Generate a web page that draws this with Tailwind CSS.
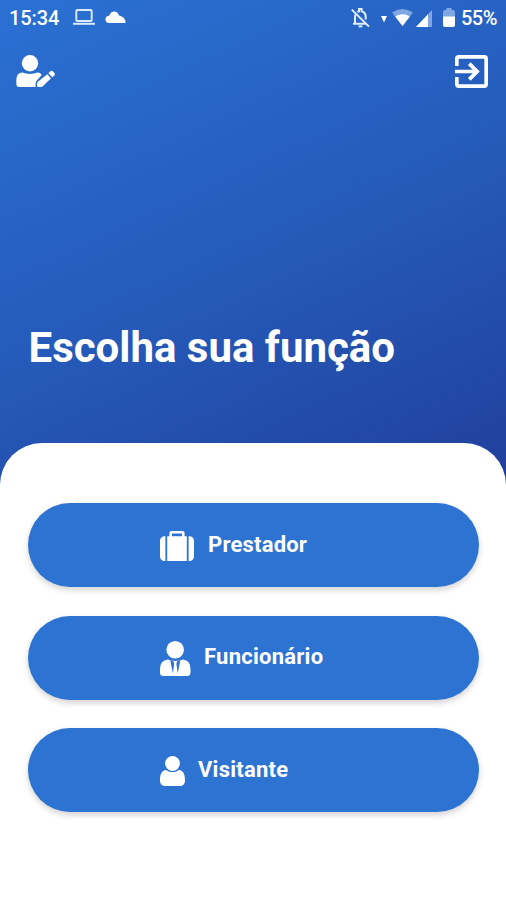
<!DOCTYPE html>
<html lang="pt-BR">
<head>
  <meta charset="UTF-8">
  <meta name="viewport" content="width=device-width, initial-scale=1.0">
  <title>Escolha sua função</title>
  <script src="https://cdn.jsdelivr.net/npm/@tailwindcss/browser@4"></script>
</head>
<body class="bg-white font-['Roboto',sans-serif] text-white">
  <div class="flex flex-col h-[900px] w-[506px] overflow-hidden bg-white">
    <div class="flex flex-col shrink-0 h-[485px] bg-linear-[155deg,#2a71d3_0%,#2559b8_55%,#213f9b_100%]">
      <!-- Status bar -->
      <div class="flex items-center justify-between h-9 pl-[9px] pr-[7px]">
        <div class="flex items-center">
          <span class="w-[50px] text-[20px] leading-9 font-medium tracking-[-0.1px]">15:34</span>
          <svg class="ml-[14px] -mt-0.5 w-[22px] h-4" viewBox="0 0 22 16" fill="none" stroke="#dcebfb">
            <rect x="3.3" y="1" width="15.4" height="11" rx="1" stroke-width="1.9"/>
            <path d="M0 14.8h22" stroke-width="2"/>
          </svg>
          <svg class="ml-[10px] -mt-0.5 w-[21px] h-3" viewBox="0 0 21 12" fill="#fff">
            <path d="M3.6 12A3.6 3.6 0 0 1 3 5L4.4 4.600Q5.600.500 9.200.500T14 4.400l1.500.7Q20.600 6.700 20.600 12z"/>
          </svg>
        </div>
        <div class="flex items-center">
          <svg class="w-[19px] h-5" viewBox="0 0 19 20" fill="none" stroke="#e3eefb" stroke-width="2">
            <path d="M4.600 6.500C4.200 7.400 4 8.400 4 9.500V15.600M2 15.800H14.500M6.500 4.200C7 3.700 7.400 3.400 8 3.200V1H10.600V3.200C13.400 3.900 14.700 6.400 14.700 9V11.500"/>
            <path d="M0.800 1.600L18 18.600"/>
            <path d="M7.500 18.400h3.800" stroke-width="2"/>
          </svg>
          <svg class="ml-[11px] mt-0.5 w-[6px] h-[7px]" viewBox="0 0 6 7" fill="#fff"><path d="M0 0h6L3 6.500z"/></svg>
          <svg class="ml-[5px] -mt-0.5 w-[21px] h-[17px]" viewBox="0 0 21 17">
            <path d="M0 3.600Q10.500-3.600 21 3.600L10.500 17z" fill="#7fa7e2"/>
            <path d="M3.200 7.400Q10.500 3.100 17.800 7.400L10.500 17z" fill="#fff"/>
          </svg>
          <svg class="ml-[3px] w-4 h-[17px]" viewBox="0 0 16 17">
            <path d="M16 0V17H0z" fill="#7fa7e2"/>
            <path d="M12 4.250V17H0z" fill="#fff"/>
          </svg>
          <svg class="ml-[11px] -mt-0.5 w-3 h-[19px]" viewBox="0 0 12 19">
            <path d="M3.500 0h5v2H10q2 0 2 2v5H0V4q0-2 2-2h1.500z" fill="#7fa7e2"/>
            <path d="M0 8.500h12V17q0 2-2 2H2q-2 0-2-2z" fill="#fff"/>
          </svg>
          <span class="ml-[6px] w-[38px] text-[20px] leading-9 font-medium tracking-[-0.500px] whitespace-nowrap">55%</span>
        </div>
      </div>

      <!-- Profile and exit -->
      <div class="flex items-start justify-between pt-[19px] pl-4 pr-[18px]">
        <button aria-label="Editar perfil">
          <svg class="block w-10 h-8" viewBox="0 0 40 32" fill="currentColor">
            <circle cx="14" cy="8.200" r="8.200"/>
            <path d="M6.500 17.600Q10 19 14 19t7.500-1.400q3 0 4.200 2.400l-4.900 5.500q-1.200 1.500-1.200 3.500V32H3.500Q.3 32 .3 28.500V25.500Q.3 17.600 6.500 17.600z"/>
            <path d="M31.300 19.300l3.700 3.900-7.600 7.600q-1.200 1.200-2.700 1.200H22q-.9 0-.9-1V28.700q0-1.200 1.100-2.200zM32.300 18.300l1.600-1.600q1.600-1.600 3.200-.1l1.100 1.100q1.500 1.600 0 3.100l-1.800 1.500z"/>
          </svg>
        </button>
        <button aria-label="Sair">
          <svg class="block w-[33px] h-[33px]" viewBox="3 3 18 18" fill="currentColor">
            <path d="M19 3H5a2 2 0 0 0-2 2v4h2V5h14v14H5v-4H3v4a2 2 0 0 0 2 2h14a2 2 0 0 0 2-2V5a2 2 0 0 0-2-2M10.080 15.580L11.500 17l5-5-5-5-1.420 1.410L12.670 11H3v2h9.670z"/>
          </svg>
        </button>
      </div>

      <h1 class="mt-[235px] pl-[28.500px] text-[42px] leading-[50px] font-bold whitespace-nowrap">Escolha sua função</h1>
    </div>

    <!-- Role options -->
    <main class="relative -mt-[42px] flex flex-1 flex-col gap-[28.5px] rounded-t-[42px] bg-white px-[28px] pt-[60px]">
      <button class="flex items-center w-[451px] h-[84px] pl-[132px] rounded-full bg-[#2c73d2] shadow-[0_3px_6px_rgba(0,0,0,0.18)]">
        <svg class="mt-0.5 w-[34px] h-[30px]" viewBox="0 0 34 30" fill="currentColor">
          <path d="M5.400 5.300V30H4.500A4.500 4.500 0 0 1 0 25.500V9.800A4.500 4.500 0 0 1 4.500 5.300zM28.600 5.300h.9A4.500 4.500 0 0 1 34 9.800v15.700a4.500 4.500 0 0 1-4.500 4.500h-.9z"/>
          <path fill-rule="evenodd" d="M7.200 5.300h2.200V2Q9.400 0 11.400 0h11.200q2 0 2 2v3.300h2.200V30H7.200zM12 2.600v2.700h10V2.600z"/>
        </svg>
        <span class="ml-[14px] text-[22px] leading-[26px] font-bold tracking-[0.2px]">Prestador</span>
      </button>
      <button class="flex items-center w-[451px] h-[84px] pl-[132px] rounded-full bg-[#2c73d2] shadow-[0_3px_6px_rgba(0,0,0,0.18)]">
        <svg class="mt-0.5 w-[31px] h-[35px]" viewBox="0 0 31 35" fill="currentColor">
          <circle cx="15.200" cy="8.800" r="8.800"/>
          <path d="M8 18.600Q11.500 20 15.300 20t7.700-1.400Q30.500 19.500 30.500 28V31.500Q30.500 35 27 35H3.500Q0 35 0 31.500V28Q0 19.500 8 18.600z"/>
          <path d="M10.200 19l3.100 1.100.9 2.700-1.300 9.700zM20.400 19l-3.100 1.100-.9 2.700 1.300 9.700z" fill="#2c73d2"/>
        </svg>
        <span class="ml-[13px] text-[22px] leading-[26px] font-bold tracking-[0.250px] -mt-0.5">Funcionário</span>
      </button>
      <button class="flex items-center w-[451px] h-[84px] pl-[132px] rounded-full bg-[#2c73d2] shadow-[0_3px_6px_rgba(0,0,0,0.18)]">
        <svg class="mt-0.5 w-[25px] h-[30px]" viewBox="0 0 25 30" fill="currentColor">
          <path d="M25 24.400C25 28 22.900 30 19.500 30h-14C2.100 30 0 28 0 24.400 0 19 1.300 13.900 6.200 13.900c1.200.9 3.300 2.100 6.300 2.100s5.100-1.200 6.300-2.100C23.700 13.900 25 19 25 24.400z"/>
          <circle cx="12.500" cy="7.500" r="7.400"/>
        </svg>
        <span class="ml-[13px] text-[22px] leading-[26px] font-bold tracking-[0.250px]">Visitante</span>
      </button>
    </main>
  </div>
</body>
</html>
